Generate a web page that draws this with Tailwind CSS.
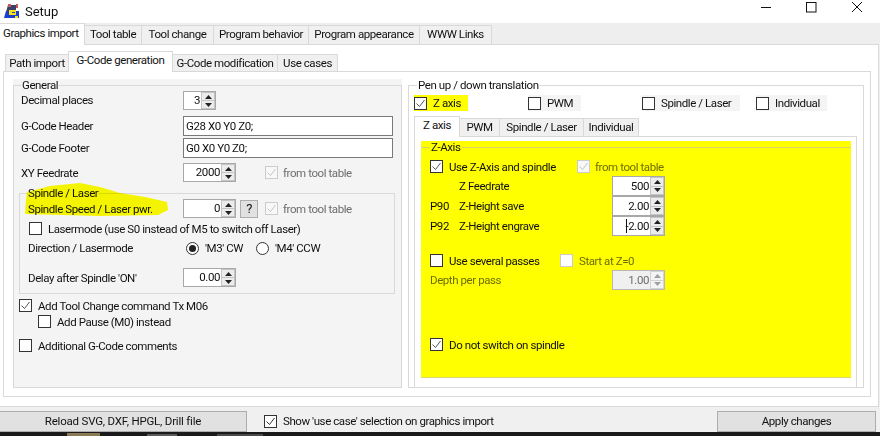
<!DOCTYPE html>
<html lang="en">
<head>
<meta charset="UTF-8" />
<title>Setup</title>
<script src="https://cdn.jsdelivr.net/npm/@tailwindcss/browser@4"></script>
</head>
<body class="relative w-[880px] h-[436px] overflow-hidden whitespace-nowrap bg-[#f0f0f0] text-[11.5px] tracking-[-0.42px] leading-[16px] text-[#111] font-['Roboto',sans-serif]">

  <!-- title bar -->
  <div class="h-[23px] bg-white flex items-center relative">
    <svg class="ml-[4px] w-[16px] h-[16px]" viewBox="0 0 16 16"><path d="M4 1H12V8H2Z" fill="#3b4066"/><rect x="4" y="0" width="3" height="3" fill="#c25a5a"/><rect x="12" y="0" width="2" height="4" fill="#c25a5a"/><path d="M2 7H15V14H0Z" fill="#1c3fd0"/><rect x="5" y="6" width="7" height="5" fill="#f4e21a"/><rect x="8" y="8" width="3" height="1" fill="#1c3fd0"/><rect x="11" y="12" width="3" height="2" fill="#f4e21a"/></svg>
    <span class="ml-[5px] text-[13px] tracking-normal">Setup</span>
    <svg class="absolute left-[755px] top-0 w-[120px] h-[16px]" viewBox="0 0 120 16" fill="none" stroke="#111"><path d="M6 7.5H16"/><rect x="51.5" y="2.5" width="9.5" height="9.5"/><path d="M97 2L107 12M107 2L97 12"/></svg>
  </div>

  <!-- outer tabs -->
  <div class="h-[21px] flex items-end bg-[#eeeeee]">
    <div class="relative z-10 -mb-px h-[22px] w-[85px] pl-[3px] pt-[1px] bg-white border-t border-r border-[#d9d9d9]">Graphics import</div>
    <div class="h-[19px] w-[57px] text-center border-t border-r border-[#d9d9d9] bg-[#f0f0f0]">Tool table</div>
    <div class="h-[19px] w-[72px] text-center border-t border-r border-[#d9d9d9] bg-[#f0f0f0]">Tool change</div>
    <div class="h-[19px] w-[95px] text-center border-t border-r border-[#d9d9d9] bg-[#f0f0f0]">Program behavior</div>
    <div class="h-[19px] w-[111px] text-center border-t border-r border-[#d9d9d9] bg-[#f0f0f0]">Program appearance</div>
    <div class="h-[19px] w-[72px] text-center border-t border-r border-[#d9d9d9] bg-[#f0f0f0]">WWW Links</div>
  </div>

  <!-- outer page -->
  <div class="w-[879px] h-[363px] bg-white border border-l-0 border-[#d9d9d9] pl-[3px] pt-[6px]">
    <!-- inner tabs -->
    <div class="h-[20px] flex items-end pl-[2px]">
      <div class="h-[17px] w-[63px] text-center border-t border-l border-[#d9d9d9] bg-[#f0f0f0]">Path import</div>
      <div class="relative z-10 -mb-px h-[21px] w-[105px] text-center bg-white border-t border-x border-[#d9d9d9]">G-Code generation</div>
      <div class="h-[17px] w-[105px] text-center border-t border-r border-[#d9d9d9] bg-[#f0f0f0]">G-Code modification</div>
      <div class="h-[17px] w-[60px] text-center border-t border-r border-[#d9d9d9] bg-[#f0f0f0]">Use cases</div>
    </div>

    <!-- inner page -->
    <div class="w-[868px] h-[326px] border border-[#d9d9d9] pl-[9px] pt-[7px] flex">

      <!-- left column -->
      <div class="w-[389px] h-[309px] bg-[#f4f4f4]">
        <fieldset class="h-[309px] border border-[#d9d9d9] pl-[7px]">
          <legend class="h-[12px] pl-px pr-px leading-[12px]">General</legend>

          <div class="h-[19px] flex items-center">
            <span class="w-[162px] -mt-px">Decimal places</span>
            <div class="w-[33px] h-[19px] bg-white border border-[#a8a8a8] flex"><span class="flex-1 text-right leading-[17px] pr-px">3</span><div class="w-[14px] flex flex-col"><div class="flex-1 bg-[#ececec] border border-[#c4c4c4] flex items-center justify-center"><svg width="7" height="4"><path d="M3.5 0L7 4H0Z" fill="#222"/></svg></div><div class="flex-1 bg-[#ececec] border border-t-0 border-[#c4c4c4] flex items-center justify-center"><svg width="7" height="4"><path d="M0 0H7L3.5 4Z" fill="#222"/></svg></div></div></div>
          </div>

          <div class="h-[20px] mt-[6px] flex items-center">
            <span class="w-[162px]">G-Code Header</span>
            <div class="w-[210px] h-[20px] bg-white border border-[#7a7a7a] pl-[2px] leading-[18px]">G28 X0 Y0 Z0;</div>
          </div>

          <div class="h-[19px] mt-[2px] flex items-center">
            <span class="w-[162px]">G-Code Footer</span>
            <div class="w-[210px] h-[20px] bg-white border border-[#7a7a7a] pl-[2px] leading-[18px]">G0 X0 Y0 Z0;</div>
          </div>

          <div class="h-[19px] mt-[6px] flex items-center">
            <span class="w-[162px]">XY Feedrate</span>
            <div class="w-[53px] h-[19px] bg-white border border-[#a8a8a8] flex"><span class="flex-1 text-right leading-[17px] pr-px">2000</span><div class="w-[14px] flex flex-col"><div class="flex-1 bg-[#ececec] border border-[#c4c4c4] flex items-center justify-center"><svg width="7" height="4"><path d="M3.5 0L7 4H0Z" fill="#222"/></svg></div><div class="flex-1 bg-[#ececec] border border-t-0 border-[#c4c4c4] flex items-center justify-center"><svg width="7" height="4"><path d="M0 0H7L3.5 4Z" fill="#222"/></svg></div></div></div>
            <div class="ml-[29px] w-[13px] h-[13px] border border-[#cccccc] bg-[#f8f8f8] flex items-center justify-center"><svg width="11" height="11" viewBox="0 0 11 11" fill="none" stroke="#c4c4c4"><path d="M1.5 5.5L4.5 8.5L9.5 2"/></svg></div>
            <span class="ml-[5px] text-[#6d6d6d]">from tool table</span>
          </div>

          <!-- spindle group -->
          <fieldset class="w-[376px] h-[107px] -ml-[2px] mt-[5px] border border-[#d9d9d9] pl-[8px]">
            <legend class="h-[12px] leading-[12px] pr-px">Spindle / Laser</legend>
            <div class="h-[19px] flex items-center">
              <span class="w-[155px]">Spindle Speed / Laser pwr.</span>
              <div class="w-[53px] h-[19px] bg-white border border-[#a8a8a8] flex"><span class="flex-1 text-right leading-[17px] pr-px">0</span><div class="w-[14px] flex flex-col"><div class="flex-1 bg-[#ececec] border border-[#c4c4c4] flex items-center justify-center"><svg width="7" height="4"><path d="M3.5 0L7 4H0Z" fill="#222"/></svg></div><div class="flex-1 bg-[#ececec] border border-t-0 border-[#c4c4c4] flex items-center justify-center"><svg width="7" height="4"><path d="M0 0H7L3.5 4Z" fill="#222"/></svg></div></div></div>
              <div class="ml-[4px] w-[18px] h-[18px] bg-[#e1e1e1] border border-[#adadad] text-center leading-[16px] text-[13px]">?</div>
              <div class="ml-[7px] w-[13px] h-[13px] border border-[#cccccc] bg-[#f8f8f8] flex items-center justify-center"><svg width="11" height="11" viewBox="0 0 11 11" fill="none" stroke="#c4c4c4"><path d="M1.5 5.5L4.5 8.5L9.5 2"/></svg></div>
              <span class="ml-[5px] text-[#6d6d6d]">from tool table</span>
            </div>
            <div class="h-[13px] mt-[4px] flex items-center">
              <div class="ml-px w-[13px] h-[13px] border border-[#333] bg-white"></div>
              <span class="ml-[6px]">Lasermode (use S0 instead of M5 to switch off Laser)</span>
            </div>
            <div class="h-[16px] mt-[5px] flex items-center">
              <span class="w-[158px]">Direction / Lasermode</span>
              <div class="w-[13px] h-[13px] rounded-full border border-[#333] bg-white flex items-center justify-center"><div class="w-[7px] h-[7px] rounded-full bg-[#222]"></div></div>
              <span class="ml-[6px] w-[51px]">'M3' CW</span>
              <div class="w-[13px] h-[13px] rounded-full border border-[#333] bg-white"></div>
              <span class="ml-[6px]">'M4' CCW</span>
            </div>
            <div class="h-[19px] mt-[12px] flex items-center">
              <span class="w-[155px]">Delay after Spindle 'ON'</span>
              <div class="w-[53px] h-[19px] bg-white border border-[#a8a8a8] flex"><span class="flex-1 text-right leading-[17px] pr-px">0.00</span><div class="w-[14px] flex flex-col"><div class="flex-1 bg-[#ececec] border border-[#c4c4c4] flex items-center justify-center"><svg width="7" height="4"><path d="M3.5 0L7 4H0Z" fill="#222"/></svg></div><div class="flex-1 bg-[#ececec] border border-t-0 border-[#c4c4c4] flex items-center justify-center"><svg width="7" height="4"><path d="M0 0H7L3.5 4Z" fill="#222"/></svg></div></div></div>
            </div>
          </fieldset>

          <div class="h-[13px] mt-[5px] -ml-[2px] flex items-center">
            <div class="w-[13px] h-[13px] border border-[#333] bg-white flex items-center justify-center"><svg width="11" height="11" viewBox="0 0 11 11" fill="none" stroke="#555"><path d="M1.5 5.5L4.5 8.5L9.5 2"/></svg></div>
            <span class="ml-[6px]">Add Tool Change command Tx M06</span>
          </div>
          <div class="h-[13px] mt-[3px] ml-[17px] flex items-center">
            <div class="w-[13px] h-[13px] border border-[#333] bg-white"></div>
            <span class="ml-[6px]">Add Pause (M0) instead</span>
          </div>
          <div class="h-[13px] mt-[11px] -ml-[2px] flex items-center">
            <div class="w-[13px] h-[13px] border border-[#333] bg-white"></div>
            <span class="ml-[6px]">Additional G-Code comments</span>
          </div>
        </fieldset>
      </div>

      <!-- right column -->
      <div class="ml-[6px] w-[456px]">
        <fieldset class="h-[309px] border border-[#d9d9d9] pl-[5px]">
          <legend class="h-[12px] ml-[3px] px-px leading-[12px]">Pen up / down translation</legend>
          <div class="h-[16px] mt-[4px] flex items-center">
            <div class="w-[54px] h-[16px] bg-[#ffff00] flex items-center"><div class="w-[13px] h-[13px] border border-[#333] bg-white flex items-center justify-center"><svg width="11" height="11" viewBox="0 0 11 11" fill="none" stroke="#555"><path d="M1.5 5.5L4.5 8.5L9.5 2"/></svg></div><span class="ml-[6px]">Z axis</span></div>
            <div class="ml-[60px] w-[53px] h-[16px] bg-[#f4f4f4] flex items-center"><div class="w-[13px] h-[13px] border border-[#333] bg-white"></div><span class="ml-[6px]">PWM</span></div>
            <div class="ml-[61px] w-[98px] h-[16px] bg-[#f4f4f4] flex items-center"><div class="w-[13px] h-[13px] border border-[#333] bg-white"></div><span class="ml-[6px]">Spindle / Laser</span></div>
            <div class="ml-[16px] w-[71px] h-[16px] bg-[#f4f4f4] flex items-center"><div class="w-[13px] h-[13px] border border-[#333] bg-white"></div><span class="ml-[6px]">Individual</span></div>
          </div>
          <div class="h-[20px] mt-[5px] flex items-end">
            <div class="relative z-10 -mb-px h-[21px] w-[46px] text-center bg-white border-t border-x border-[#d9d9d9]">Z axis</div>
            <div class="h-[18px] w-[40px] text-center border-t border-r border-[#d9d9d9] bg-[#f0f0f0]">PWM</div>
            <div class="h-[18px] w-[84px] text-center border-t border-r border-[#d9d9d9] bg-[#f0f0f0]">Spindle / Laser</div>
            <div class="h-[18px] w-[55px] text-center border-t border-r border-[#d9d9d9] bg-[#f0f0f0]">Individual</div>
          </div>
          <!-- z axis page -->
          <div class="w-[443px] h-[251px] border border-b-0 border-[#d9d9d9] pl-[6px] pt-[4px]">
            <div class="w-[430px] h-[237px] bg-[#ffff00] border-b border-[#d8d86a]">
              <fieldset class="h-[235px] border-t border-[#d8d860] pl-[9px]">
                <legend class="h-[12px] px-px leading-[12px] bg-[#ffff00]">Z-Axis</legend>
                <div class="h-[13px] mt-[7px] flex items-center">
                  <div class="w-[13px] h-[13px] border border-[#333] bg-white flex items-center justify-center"><svg width="11" height="11" viewBox="0 0 11 11" fill="none" stroke="#555"><path d="M1.5 5.5L4.5 8.5L9.5 2"/></svg></div>
                  <span class="ml-[6px] w-[128px]">Use Z-Axis and spindle</span>
                  <div class="w-[13px] h-[13px] border border-[#cccccc] bg-[#f8f8f8] flex items-center justify-center"><svg width="11" height="11" viewBox="0 0 11 11" fill="none" stroke="#c4c4c4"><path d="M1.5 5.5L4.5 8.5L9.5 2"/></svg></div>
                  <span class="ml-[5px] text-[#6d6d00]">from tool table</span>
                </div>
                <div class="h-[20px] mt-[3px] flex items-center">
                  <span class="w-[29px]"></span><span class="w-[153px]">Z Feedrate</span>
                  <div class="w-[53px] h-[20px] bg-white border border-[#a8a8a8] flex"><span class="flex-1 text-right leading-[18px] pr-px">500</span><div class="w-[14px] flex flex-col"><div class="flex-1 bg-[#ececec] border border-[#c4c4c4] flex items-center justify-center"><svg width="7" height="4"><path d="M3.5 0L7 4H0Z" fill="#222"/></svg></div><div class="flex-1 bg-[#ececec] border border-t-0 border-[#c4c4c4] flex items-center justify-center"><svg width="7" height="4"><path d="M0 0H7L3.5 4Z" fill="#222"/></svg></div></div></div>
                </div>
                <div class="h-[20px] flex items-center">
                  <span class="w-[29px]">P90</span><span class="w-[153px]">Z-Height save</span>
                  <div class="w-[53px] h-[20px] bg-white border border-[#a8a8a8] flex"><span class="flex-1 text-right leading-[18px] pr-px">2.00</span><div class="w-[14px] flex flex-col"><div class="flex-1 bg-[#ececec] border border-[#c4c4c4] flex items-center justify-center"><svg width="7" height="4"><path d="M3.5 0L7 4H0Z" fill="#222"/></svg></div><div class="flex-1 bg-[#ececec] border border-t-0 border-[#c4c4c4] flex items-center justify-center"><svg width="7" height="4"><path d="M0 0H7L3.5 4Z" fill="#222"/></svg></div></div></div>
                </div>
                <div class="h-[20px] flex items-center">
                  <span class="w-[29px]">P92</span><span class="w-[153px]">Z-Height engrave</span>
                  <div class="w-[53px] h-[20px] bg-white border border-[#a8a8a8] flex"><span class="flex-1 text-right leading-[18px] pr-px"><span class="border-l border-[#111] mr-[-1px]"></span>-2.00</span><div class="w-[14px] flex flex-col"><div class="flex-1 bg-[#ececec] border border-[#c4c4c4] flex items-center justify-center"><svg width="7" height="4"><path d="M3.5 0L7 4H0Z" fill="#222"/></svg></div><div class="flex-1 bg-[#ececec] border border-t-0 border-[#c4c4c4] flex items-center justify-center"><svg width="7" height="4"><path d="M0 0H7L3.5 4Z" fill="#222"/></svg></div></div></div>
                </div>
                <div class="h-[13px] mt-[18px] flex items-center">
                  <div class="w-[13px] h-[13px] border border-[#333] bg-white"></div>
                  <span class="ml-[6px] w-[111px]">Use several passes</span>
                  <div class="w-[13px] h-[13px] border border-[#cccccc] bg-white"></div>
                  <span class="ml-[6px] text-[#6d6d00]">Start at Z=0</span>
                </div>
                <div class="h-[20px] mt-[3px] flex items-center">
                  <span class="w-[182px] text-[#6d6d00]">Depth per pass</span>
                  <div class="w-[53px] h-[20px] bg-[#f0f0f0] border border-[#b8b8b8] flex text-[#6d6d6d]"><span class="flex-1 text-right leading-[18px] pr-px">1.00</span><div class="w-[14px] flex flex-col"><div class="flex-1 bg-[#f4f4f4] border border-[#d4d4d4] flex items-center justify-center"><svg width="7" height="4"><path d="M3.5 0L7 4H0Z" fill="#a0a0a0"/></svg></div><div class="flex-1 bg-[#f4f4f4] border border-t-0 border-[#d4d4d4] flex items-center justify-center"><svg width="7" height="4"><path d="M0 0H7L3.5 4Z" fill="#a0a0a0"/></svg></div></div></div>
                </div>
                <div class="h-[13px] mt-[48px] flex items-center">
                  <div class="w-[13px] h-[13px] border border-[#333] bg-white flex items-center justify-center"><svg width="11" height="11" viewBox="0 0 11 11" fill="none" stroke="#555"><path d="M1.5 5.5L4.5 8.5L9.5 2"/></svg></div>
                  <span class="ml-[6px]">Do not switch on spindle</span>
                </div>
              </fieldset>
            </div>
          </div>
        </fieldset>
      </div>
    </div>
  </div>

  <!-- bottom bar -->
  <div class="h-[25px] flex items-center pt-[3px]">
    <div class="-ml-px w-[248px] h-[21px] bg-[#e1e1e1] border border-[#adadad] text-center leading-[19px] tracking-[-0.2px]">Reload SVG, DXF, HPGL, Drill file</div>
    <div class="ml-[17px] w-[13px] h-[13px] border border-[#333] bg-white flex items-center justify-center"><svg width="11" height="11" viewBox="0 0 11 11" fill="none" stroke="#333"><path d="M1.5 5.5L4.5 8.5L9.5 2"/></svg></div>
    <span class="ml-[6px] w-[434px]">Show 'use case' selection on graphics import</span>
    <div class="w-[159px] h-[21px] bg-[#e1e1e1] border border-[#adadad] text-center leading-[19px]">Apply changes</div>
  </div>
  <!-- edge of the desktop below the window -->
  <div class="h-[4px] bg-[#1a1a1a] flex items-end">
    <div class="ml-[67px] w-[33px] h-[3px] bg-[#8a7a55]"></div>
    <div class="ml-[47px] w-[30px] h-[2px] bg-[#5a5a5a]"></div>
    <div class="ml-[40px] w-[46px] h-[2px] bg-[#4a4a4a]"></div>
  </div>

  <!-- marker highlight over the spindle labels -->
  <svg class="absolute left-0 top-0 w-[880px] h-[436px] mix-blend-multiply pointer-events-none" viewBox="0 0 880 436"><path d="M27 192L50 186L80 183L100 187L120 193L145 197L167 202L168 210L158 215L100 216L25 214L26 200Z" fill="#ffff00"/></svg>
</body>
</html>
